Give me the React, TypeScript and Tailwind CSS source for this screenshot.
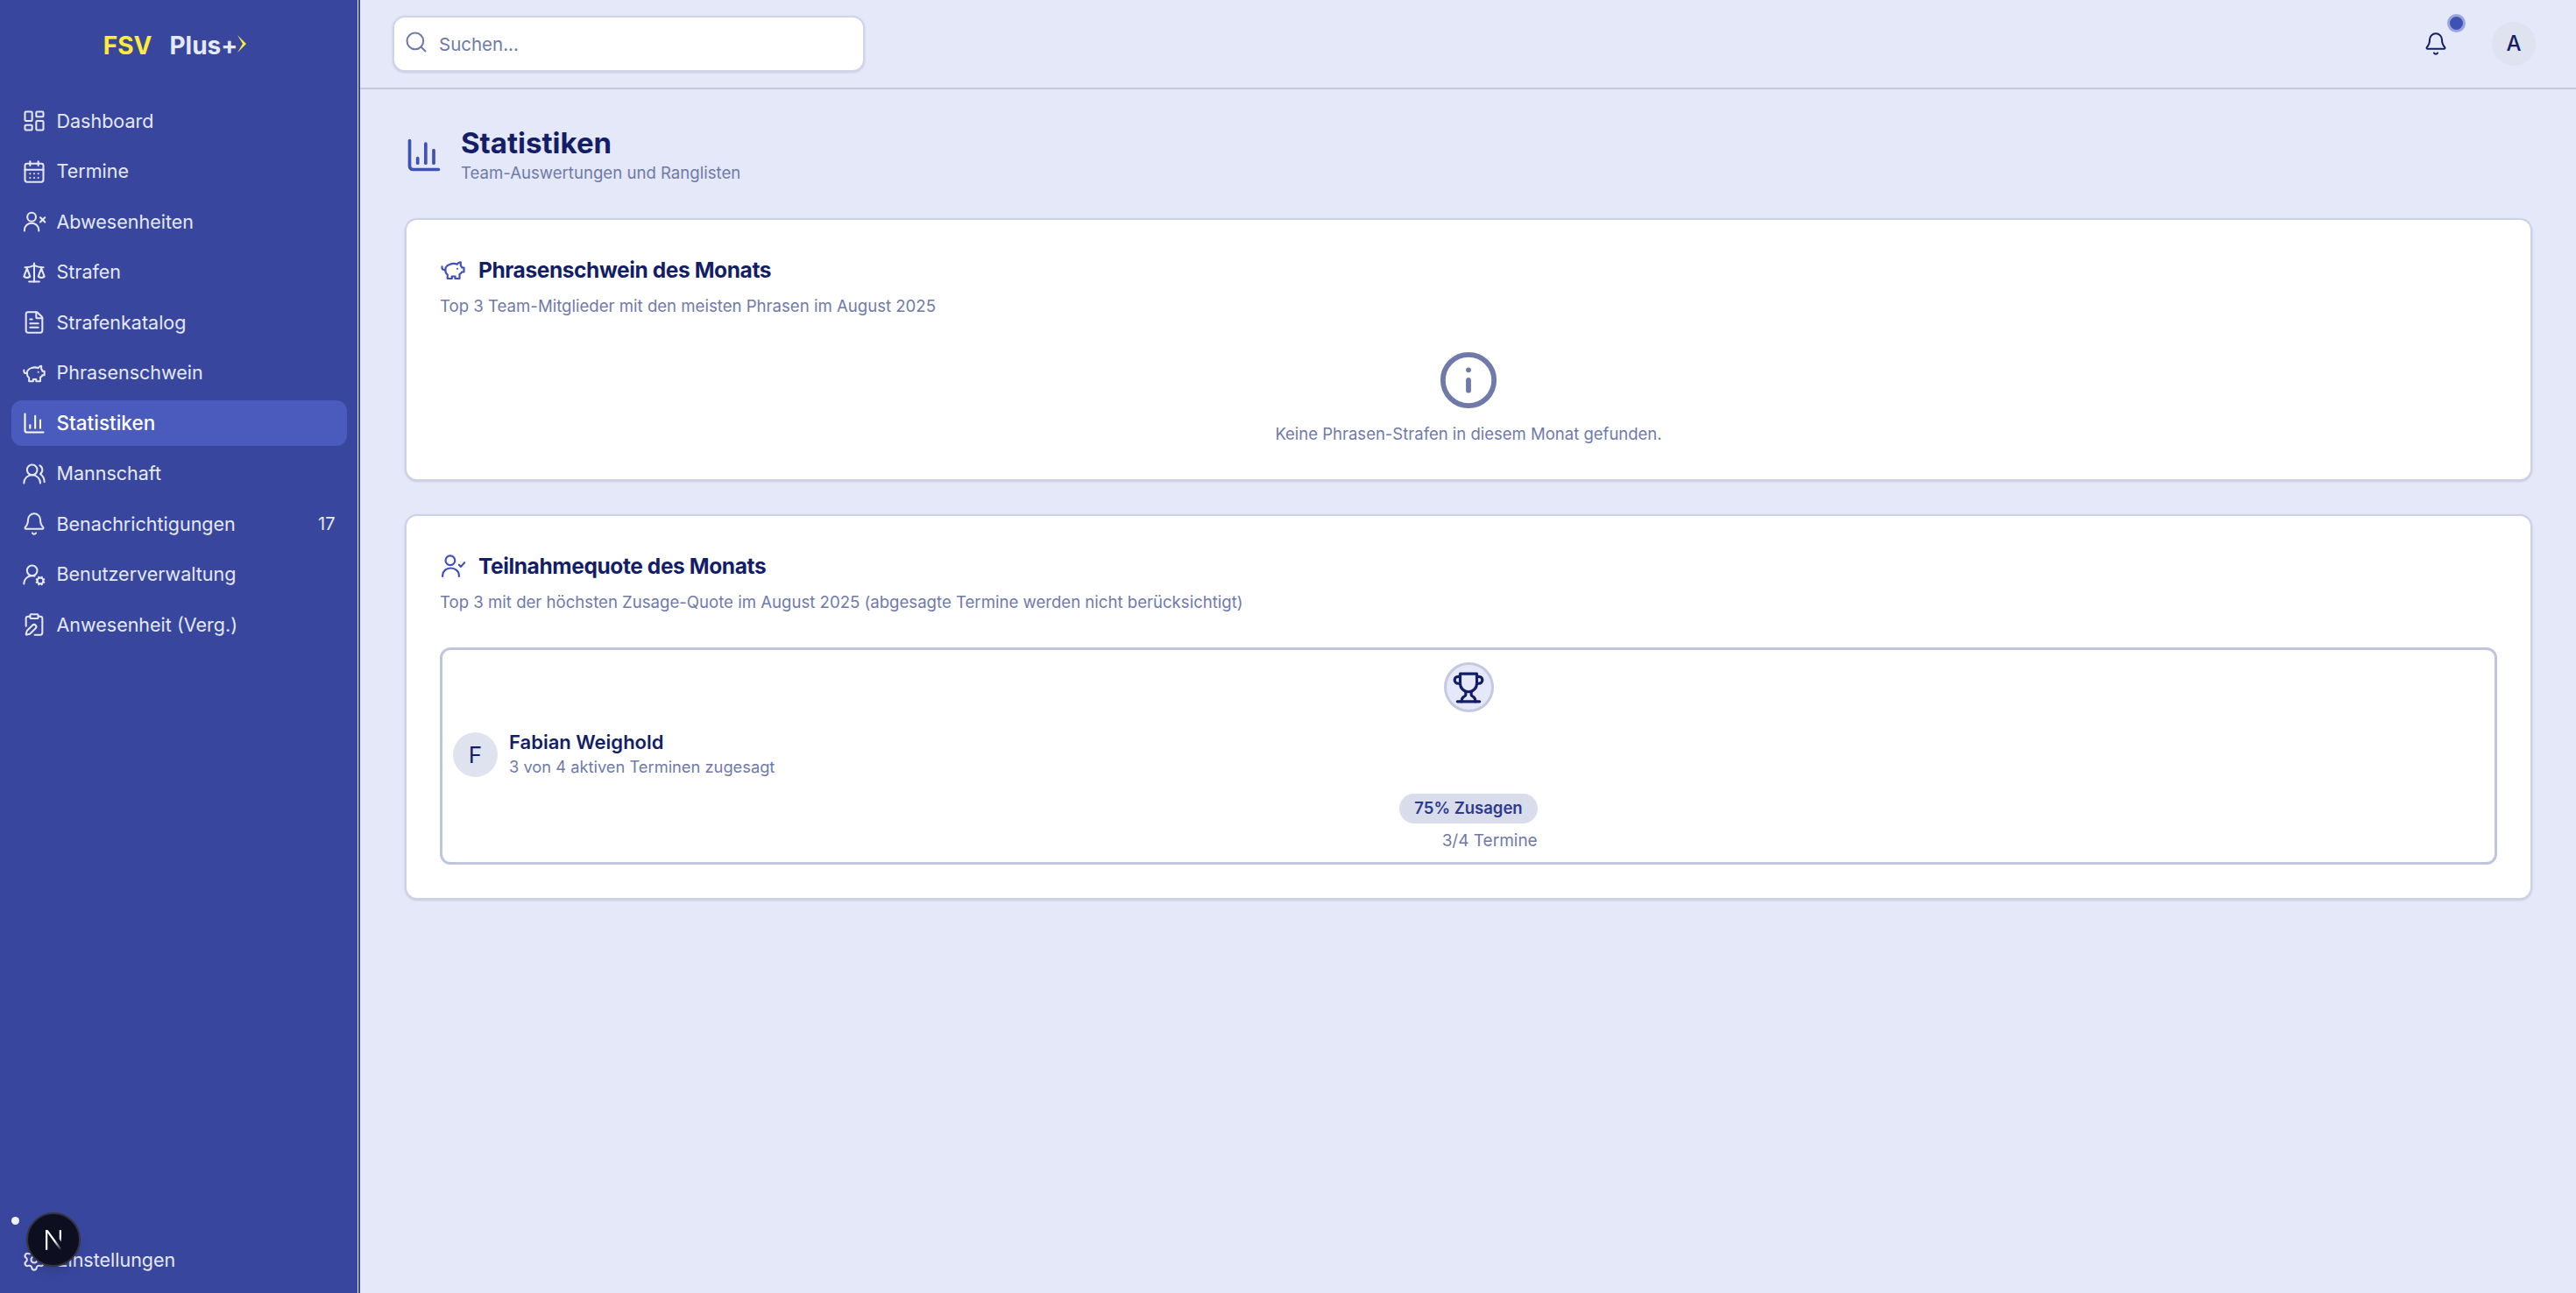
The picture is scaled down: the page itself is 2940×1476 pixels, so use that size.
import {
  Bell,
  CalendarDays,
  ChartColumn,
  ClipboardPen,
  FileText,
  Info,
  LayoutDashboard,
  Scale,
  Search,
  Settings,
  UserRoundCog,
  UsersRound,
} from 'lucide-react';

type IconProps = { className?: string; strokeWidth?: number };

function svgProps({ className, strokeWidth = 2 }: IconProps) {
  return {
    viewBox: '0 0 24 24',
    fill: 'none',
    stroke: 'currentColor',
    strokeWidth,
    strokeLinecap: 'round' as const,
    strokeLinejoin: 'round' as const,
    className,
  };
}

function PiggyIcon(props: IconProps) {
  return (
    <svg {...svgProps(props)}>
      <path d="M19 5c-1.5 0-2.8 1.4-3 2-3.5-1.5-11-.3-11 5 0 1.8 0 3 2 4.5V20h4v-2h3v2h4v-4c1-.5 1.7-1 2-2h2v-4h-2c0-1-.5-1.5-1-2V5z" />
      <path d="M2 9v1c0 1.1.9 2 2 2h1" />
      <path d="M16 11h.01" />
    </svg>
  );
}

function TrophyIcon(props: IconProps) {
  return (
    <svg {...svgProps(props)}>
      <path d="M6 9H4.5a2.5 2.5 0 0 1 0-5H6" />
      <path d="M18 9h1.5a2.5 2.5 0 0 0 0-5H18" />
      <path d="M4 22h16" />
      <path d="M10 14.66V17c0 .55-.47.98-.97 1.21C7.85 18.75 7 20.24 7 22" />
      <path d="M14 14.66V17c0 .55.47.98.97 1.21C16.15 18.75 17 20.24 17 22" />
      <path d="M18 2H6v7a6 6 0 0 0 12 0V2Z" />
    </svg>
  );
}

function UserXIcon(props: IconProps) {
  return (
    <svg {...svgProps(props)}>
      <circle cx="9.5" cy="7.5" r="4.2" />
      <path d="M2.5 21v-1a7 6.5 0 0 1 14 0v1" />
      <path d="m18 8 4.5 4.5" />
      <path d="m22.5 8-4.5 4.5" />
    </svg>
  );
}

function UserCheckIcon(props: IconProps) {
  return (
    <svg {...svgProps(props)}>
      <circle cx="9.5" cy="7" r="4.3" />
      <path d="M2.5 21.5v-1a7.5 6.5 0 0 1 15 0v1" />
      <path d="m17.5 11 1.7 1.7 3.3-3.7" />
    </svg>
  );
}

const navItems = [
  { label: 'Dashboard', icon: LayoutDashboard },
  { label: 'Termine', icon: CalendarDays },
  { label: 'Abwesenheiten', icon: UserXIcon },
  { label: 'Strafen', icon: Scale },
  { label: 'Strafenkatalog', icon: FileText },
  { label: 'Phrasenschwein', icon: PiggyIcon },
  { label: 'Statistiken', icon: ChartColumn, active: true },
  { label: 'Mannschaft', icon: UsersRound },
  { label: 'Benachrichtigungen', icon: Bell, badge: '17' },
  { label: 'Benutzerverwaltung', icon: UserRoundCog },
  { label: 'Anwesenheit (Verg.)', icon: ClipboardPen },
];

function Sidebar() {
  return (
    <aside className="relative flex h-full w-[411px] shrink-0 flex-col bg-[#38479d] text-[#e4e8f8] shadow-[inset_-2px_0_0_#38479d,inset_-3px_0_0_#e4e8f8]">
      <div className="flex h-[101px] shrink-0 items-center justify-center pr-[12px] pt-[2px] text-[28px] font-bold">
        <span className="text-[#ffeb3b]">FSV</span>
        <span className="ml-[20px] text-[#e4e8f8]">Plus+</span>
        <svg viewBox="0 0 10 20" className="mb-[4px] h-[20px] w-[10px] text-[#ffeb3b]" fill="currentColor">
          <path d="M0 0 L10 10 L0 20 L6 10 Z" />
        </svg>
      </div>

      <nav className="flex flex-col gap-[5.5px] pl-[13px] pr-[15px] pt-[11px]">
        {navItems.map((item) => (
          <div
            key={item.label}
            className={`flex h-[52px] items-center gap-[12px] rounded-[12px] px-[11.5px] ${
              item.active ? 'bg-[#4a5bbd] text-[22.5px] font-medium text-white' : 'text-[21.5px]'
            }`}
          >
            <item.icon className="h-[28px] w-[28px] shrink-0" strokeWidth={1.75} />
            <span className="flex-1">{item.label}</span>
            {item.badge && <span className="pr-[2px] text-[20px]">{item.badge}</span>}
          </div>
        ))}
      </nav>

      <div className="mt-auto px-[13px] pb-[12px]">
        <div className="flex h-[52px] items-center gap-[12px] px-[11.5px] text-[21.5px]">
          <Settings className="h-[28px] w-[28px] shrink-0" strokeWidth={1.75} />
          <span>Einstellungen</span>
        </div>
      </div>

      {/* next dev indicator */}
      <div className="absolute left-[13px] top-[1389px] h-[9px] w-[9px] rounded-full bg-[#f0f2fa]" />
      <div className="absolute left-[30px] top-[1384px] flex h-[62px] w-[62px] items-center justify-center rounded-full border-2 border-[#33343f] bg-[#0d0f20] shadow-lg">
        <svg viewBox="0 0 24 24" className="h-[27px] w-[28px]" fill="none">
          <defs>
            <linearGradient id="nGrad" x1="6" y1="4" x2="20" y2="22" gradientUnits="userSpaceOnUse">
              <stop offset="0.5" stopColor="#fff" />
              <stop offset="1" stopColor="#fff" stopOpacity="0" />
            </linearGradient>
          </defs>
          <path d="M4 2h2v20H4z" fill="#fff" />
          <path d="M4 2h2.4L21 22h-2.6z" fill="url(#nGrad)" />
          <path d="M18 2h2v12l-2-2.6z" fill="url(#nGrad)" />
        </svg>
      </div>
    </aside>
  );
}

function Topbar() {
  return (
    <header className="flex h-[102px] shrink-0 items-center justify-between border-b-2 border-[#c5c9e0] pl-[37px] pr-[46px]">
      <div className="flex h-[64px] w-[539px] items-center gap-[12px] rounded-[14px] border-2 border-[#d0d4ea] bg-white px-[11px] shadow-sm">
        <Search className="mb-[5px] h-[28px] w-[28px] text-[#6f7aaa]" strokeWidth={1.75} />
        <span className="pt-[2px] text-[20.5px] text-[#6f7aaa]">Suchen...</span>
      </div>
      <div className="flex items-center gap-[50px]">
        <div className="relative">
          <Bell className="h-[28px] w-[28px] text-[#141e66]" strokeWidth={1.75} />
          <span className="absolute left-[27px] top-[-20px] h-[21px] w-[21px] rounded-full border-[3px] border-[#9aa5de] bg-[#3f51b5]" />
        </div>
        <div className="flex h-[50px] w-[50px] items-center justify-center rounded-full bg-[#dfe3f0] text-[24px] font-medium text-[#141e66]">
          A
        </div>
      </div>
    </header>
  );
}

function Card({ icon: Icon, title, subtitle, children }: { icon: (props: IconProps) => React.ReactNode; title: string; subtitle: string; children: React.ReactNode }) {
  return (
    <section className="rounded-[14px] border-2 border-[#cdd1e6] bg-white px-[38px] pt-[38px] pb-[38px] shadow-sm">
      <div className="flex items-center gap-[14px]">
        <Icon className="h-[30px] w-[30px] text-[#3f51b5]" strokeWidth={1.75} />
        <h2 className="pt-[1px] text-[24.5px] font-bold leading-[36px] tracking-[-0.4px] text-[#141e66]">{title}</h2>
      </div>
      <p className="mt-[9px] text-[18.6px] leading-[28px] text-[#6f7aaa]">{subtitle}</p>
      {children}
    </section>
  );
}

export default function App() {
  return (
    <div className="flex h-screen w-full overflow-hidden bg-[#e4e8f8] font-['Inter',sans-serif]">
      <Sidebar />
      <main className="flex min-w-0 flex-1 flex-col">
        <Topbar />
        <div className="flex flex-col gap-[38px] pl-[51px] pr-[50px] pt-[41px]">
          <div className="flex items-center gap-[20px]">
            <ChartColumn className="h-[44px] w-[44px] text-[#3f51b5]" strokeWidth={2} />
            <div>
              <h1 className="text-[33px] font-bold leading-[40px] text-[#141e66]">Statistiken</h1>
              <p className="text-[18.6px] leading-[28px] text-[#6f7aaa]">Team-Auswertungen und Ranglisten</p>
            </div>
          </div>

          <Card icon={PiggyIcon} title="Phrasenschwein des Monats" subtitle="Top 3 Team-Mitglieder mit den meisten Phrasen im August 2025">
            <div className="flex flex-col items-center pt-[36px]">
              <Info className="h-[70px] w-[70px] text-[#6f7aaa]" strokeWidth={2} />
              <p className="mt-[12px] text-[18.5px] leading-[28px] text-[#6f7aaa]">Keine Phrasen-Strafen in diesem Monat gefunden.</p>
            </div>
          </Card>

          <Card icon={UserCheckIcon} title="Teilnahmequote des Monats" subtitle="Top 3 mit der höchsten Zusage-Quote im August 2025 (abgesagte Termine werden nicht berücksichtigt)">
            <div className="mt-[38px] flex h-[248px] flex-col items-center rounded-[12px] border-[3px] border-[#c0c5de] px-[12px] pt-[14px]">
              <div className="flex h-[57px] w-[57px] items-center justify-center rounded-full border-[3px] border-[#c5c9e0] bg-[#e4e8f8]">
                <TrophyIcon className="h-[38px] w-[38px] text-[#141e66]" strokeWidth={2} />
              </div>
              <div className="mt-[20px] flex w-full items-center gap-[13px]">
                <div className="flex h-[51px] w-[51px] items-center justify-center rounded-full bg-[#dfe3f0] text-[26px] text-[#141e66]">F</div>
                <div>
                  <div className="text-[22px] font-semibold leading-[28px] text-[#141e66]">Fabian Weighold</div>
                  <div className="text-[18.3px] leading-[28px] text-[#6f7aaa]">3 von 4 aktiven Terminen zugesagt</div>
                </div>
              </div>
              <div className="mt-[17px] flex flex-col items-end">
                <span className="flex h-[34px] items-center rounded-full bg-[#d8dceb] px-[17px] text-[18.5px] font-semibold text-[#2c3a8f]">75% Zusagen</span>
                <span className="mt-[6px] text-[19px] leading-[28px] text-[#6f7aaa]">3/4 Termine</span>
              </div>
            </div>
          </Card>
        </div>
      </main>
    </div>
  );
}
